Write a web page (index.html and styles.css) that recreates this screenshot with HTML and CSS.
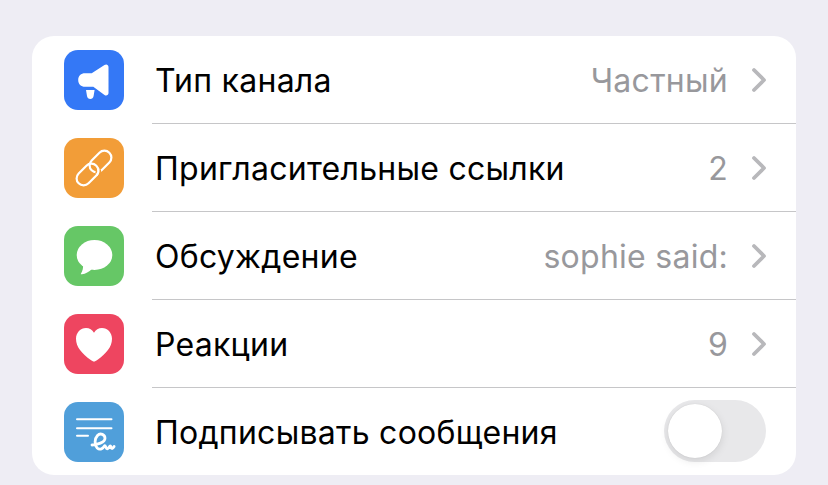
FILE: index.html
```html
<!DOCTYPE html>
<html lang="ru">
<head>
<meta charset="utf-8">
<title>Настройки канала</title>
<link rel="stylesheet" href="styles.css">
</head>
<body>
<section class="card">
  <div class="row">
    <div class="icon blue"><svg viewBox="0 0 60 60" width="60" height="60"><path d="M40.500 15c1.800-1.200 4-.2 4 2v26c0 2.200-2.200 3.300-4 2L29.300 36.800H21c-4 0-6.800-2.700-6.800-6.800s2.800-6.800 6.800-6.800h6.700z" fill="#fff"/><path d="M22 40h8.600l-1 6c-.3 1.800-1.600 3-3.300 3s-3-1.200-3.300-3z" fill="#fff"/></svg></div>
    <div class="body"><span class="label">Тип канала</span><span class="value">Частный</span><svg class="chev" viewBox="0 0 16 26" width="16" height="26"><path d="M3 3l10 10L3 23" /></svg></div>
  </div>
  <div class="row">
    <div class="icon orange"><svg viewBox="0 0 60 60" width="60" height="60"><g fill="none"><rect x="-12.500" y="-7" width="25" height="14" rx="7" transform="translate(23.500 36.500) rotate(-45)" stroke="#fff" stroke-width="2.200"/><rect x="-12.500" y="-7" width="25" height="14" rx="7" transform="translate(36.500 23.500) rotate(-45)" stroke="#fff" stroke-width="2.200"/><path d="M34.300 32.200A7 7 0 0 1 33.700 36.200" stroke="#f29d38" stroke-width="5.400"/><path d="M34.160 30.790A7 7 0 0 1 32.680 37.190" stroke="#fff" stroke-width="2.200"/></g></svg></div>
    <div class="body"><span class="label">Пригласительные ссылки</span><span class="value">2</span><svg class="chev" viewBox="0 0 16 26" width="16" height="26"><path d="M3 3l10 10L3 23" /></svg></div>
  </div>
  <div class="row">
    <div class="icon green"><svg viewBox="0 0 60 60" width="60" height="60"><ellipse cx="30.500" cy="29" rx="17.800" ry="15" fill="#fff"/><path d="M19 38c.5 3.500-.5 7-2 9.500-.5.800 0 1 1 .8 3.500-.5 7-2.300 10-5.300z" fill="#fff"/></svg></div>
    <div class="body"><span class="label">Обсуждение</span><span class="value">sophie said:</span><svg class="chev" viewBox="0 0 16 26" width="16" height="26"><path d="M3 3l10 10L3 23" /></svg></div>
  </div>
  <div class="row">
    <div class="icon red"><svg viewBox="0 0 60 60" width="60" height="60"><path d="M30 47.500c-.9 0-2-.7-3.600-1.800C18 39.800 12 33 12 24.800 12 18.600 16.500 14 22 14c3.500 0 6.300 1.800 8 4.800 1.700-3 4.500-4.800 8-4.800 5.500 0 10 4.600 10 10.800 0 8.200-6 15-14.400 20.900-1.600 1.100-2.700 1.800-3.600 1.800z" fill="#fff"/></svg></div>
    <div class="body"><span class="label">Реакции</span><span class="value">9</span><svg class="chev" viewBox="0 0 16 26" width="16" height="26"><path d="M3 3l10 10L3 23" /></svg></div>
  </div>
  <div class="row last">
    <div class="icon sky"><svg viewBox="0 0 60 60" width="60" height="60"><g fill="none" stroke="#fff" stroke-linecap="round" stroke-linejoin="round"><path d="M13 17.300h34.500M13 26.300h34.500M13 33.700h11" stroke-width="2"/><path d="M28 43c5-.3 13-2.500 13-6.800 0-3.300-4.500-6-7.500-2.700-3 3.200-3.300 9.500-.3 12.500 2.700 2.500 6 .5 7.500-2.300 1.200 0 1 3 2.600 3.200 1.600.1 1.900-3 3-3 .8 0 .5 2.600 1.800 2.600 .7 0 1.400-1 2-2" stroke-width="2.800"/></g></svg></div>
    <div class="body"><span class="label">Подписывать сообщения</span><div class="toggle"><div class="knob"></div></div></div>
  </div>
</section>
</body>
</html>
```
FILE: styles.css
```css
* { box-sizing: border-box; }
html, body { margin: 0; height: 100%; }
body {
  background: #eeedf4;
  padding: 36px 32px 10px;
  font-family: "Inter", "Liberation Sans", sans-serif;
  overflow: hidden;
}
.card {
  background: #fff;
  border-radius: 22px;
  height: 439px;
  display: flex;
  flex-direction: column;
  overflow: hidden;
}
.row {
  height: 88px;
  display: flex;
  align-items: stretch;
  padding-left: 32px;
}
.row.last { height: 87px; }
.icon {
  width: 60px;
  height: 60px;
  flex: none;
  margin: 14px 28px 0 0;
  border-radius: 14px;
}
.icon svg { display: block; }
.blue { background: #3478f6; }
.orange { background: #f29d38; }
.green { background: #66c766; }
.red { background: #ee4560; }
.sky { background: #509fda; }
.body {
  flex: 1;
  display: flex;
  align-items: center;
  padding: 0 29px 0 3px;
  border-bottom: 1px solid #c6c6c8;
  height: 88px;
}
.last .body { border-bottom: 0; height: 87px; }
.label {
  flex: 1;
  font-size: 32px;
  letter-spacing: .26px;
  color: #000;
  white-space: nowrap;
  margin-top: 2px;
}
.value {
  font-size: 32px;
  letter-spacing: .26px;
  color: #98989c;
  white-space: nowrap;
  margin: 2px 23px 0 0;
}
.chev { flex: none; }
.chev path {
  fill: none;
  stroke: #b8b8bb;
  stroke-width: 3.800;
  stroke-linecap: round;
  stroke-linejoin: round;
}
.toggle {
  width: 102px;
  height: 62px;
  border-radius: 31px;
  background: #e8e8ea;
  padding: 4px;
  margin: 0 1px 2px 0;
  flex: none;
}
.knob {
  width: 54px;
  height: 54px;
  border-radius: 50%;
  background: #fff;
  box-shadow: 0 3px 8px rgba(0,0,0,.1), 0 0 1px rgba(0,0,0,.15);
}
```
